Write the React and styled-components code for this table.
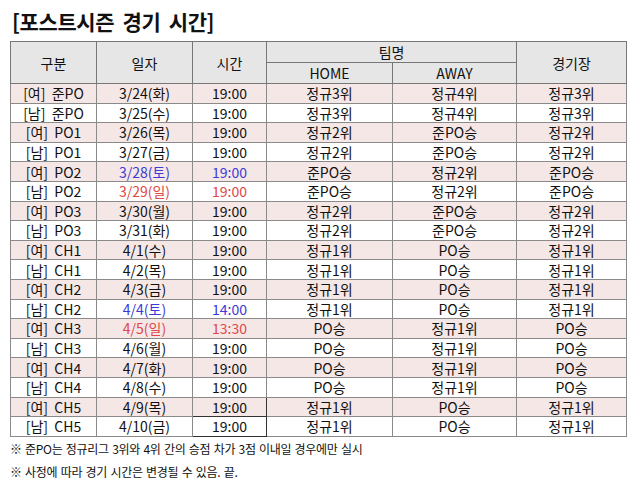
import React from 'react'
import styled, { createGlobalStyle } from 'styled-components'

const GlobalStyle = createGlobalStyle`
  body {
    margin: 0;
    background: #fff;
    font-family: "Noto Sans CJK KR", "Noto Sans", sans-serif;
    color: #111;
  }
`

const Page = styled.div`
  width: 640px;
  height: 483px;
  padding: 8px 0 0 10px;
  box-sizing: border-box;
`

const Title = styled.h1`
  margin: 0 0 6px 2px;
  font-size: 21px;
  font-weight: 700;
  line-height: 27px;
  letter-spacing: -0.4px;
  word-spacing: 4px;
`

const Table = styled.table`
  border-collapse: collapse;
  table-layout: fixed;
  width: 616px;
  border: 1px solid #666;
`

const Head = styled.th`
  background: #e6e6e6;
  font-weight: 400;
  font-size: 14px;
  height: ${p => p.$h || 20}px;
  padding: 0;
  border: 1px solid #777;
  text-align: center;
  vertical-align: middle;
  line-height: 1;
`

const Row = styled.tr`
  background: ${p => (p.$tint ? '#f6e7e7' : '#fff')};
`

const Cell = styled.td`
  height: 18.6px;
  padding: 0;
  font-size: 14px;
  line-height: 1;
  text-align: center;
  vertical-align: middle;
  white-space: pre;
  border: 1px solid #8a8a8a;
  color: ${p => (p.$tone === 'sat' ? '#3b3bd6' : p.$tone === 'sun' ? '#e04848' : '#111')};
  ${p => p.$picked && 'border: 1px solid #333;'}
`

const Note = styled.p`
  margin: 0;
  font-size: 12px;
  line-height: 23px;
  letter-spacing: -0.3px;
  word-spacing: 1px;
`

const rows = [
  ['[여]  준PO', '3/24(화)', '19:00', '정규3위', '정규4위', '정규3위'],
  ['[남]  준PO', '3/25(수)', '19:00', '정규3위', '정규4위', '정규3위'],
  ['[여]  PO1', '3/26(목)', '19:00', '정규2위', '준PO승', '정규2위'],
  ['[남]  PO1', '3/27(금)', '19:00', '정규2위', '준PO승', '정규2위'],
  ['[여]  PO2', '3/28(토)', '19:00', '준PO승', '정규2위', '준PO승', 'sat'],
  ['[남]  PO2', '3/29(일)', '19:00', '준PO승', '정규2위', '준PO승', 'sun'],
  ['[여]  PO3', '3/30(월)', '19:00', '정규2위', '준PO승', '정규2위'],
  ['[남]  PO3', '3/31(화)', '19:00', '정규2위', '준PO승', '정규2위'],
  ['[여]  CH1', '4/1(수)', '19:00', '정규1위', 'PO승', '정규1위'],
  ['[남]  CH1', '4/2(목)', '19:00', '정규1위', 'PO승', '정규1위'],
  ['[여]  CH2', '4/3(금)', '19:00', '정규1위', 'PO승', '정규1위'],
  ['[남]  CH2', '4/4(토)', '14:00', '정규1위', 'PO승', '정규1위', 'sat'],
  ['[여]  CH3', '4/5(일)', '13:30', 'PO승', '정규1위', 'PO승', 'sun'],
  ['[남]  CH3', '4/6(월)', '19:00', 'PO승', '정규1위', 'PO승'],
  ['[여]  CH4', '4/7(화)', '19:00', 'PO승', '정규1위', 'PO승'],
  ['[남]  CH4', '4/8(수)', '19:00', 'PO승', '정규1위', 'PO승'],
  ['[여]  CH5', '4/9(목)', '19:00', '정규1위', 'PO승', '정규1위'],
  ['[남]  CH5', '4/10(금)', '19:00', '정규1위', 'PO승', '정규1위'],
]

const widths = [86, 96, 74, 126, 124, 110]

const App = () => (
  <Page>
    <GlobalStyle />
    <Title>[포스트시즌 경기 시간]</Title>
    <Table>
      <colgroup>
        {widths.map((w, i) => <col key={i} style={{ width: w }} />)}
      </colgroup>
      <thead>
        <tr>
          <Head rowSpan={2}>구분</Head>
          <Head rowSpan={2}>일자</Head>
          <Head rowSpan={2}>시간</Head>
          <Head colSpan={2}>팀명</Head>
          <Head rowSpan={2}>경기장</Head>
        </tr>
        <tr>
          <Head $h={20}>HOME</Head>
          <Head $h={20}>AWAY</Head>
        </tr>
      </thead>
      <tbody>
        {rows.map((r, i) => (
          <Row key={i} $tint={i % 2 === 0}>
            <Cell>{r[0]}</Cell>
            <Cell $tone={r[6]}>{r[1]}</Cell>
            <Cell $tone={r[6]} $picked={i >= 16}>{r[2]}</Cell>
            <Cell>{r[3]}</Cell>
            <Cell>{r[4]}</Cell>
            <Cell>{r[5]}</Cell>
          </Row>
        ))}
      </tbody>
    </Table>
    <Note>※ 준PO는 정규리그 3위와 4위 간의 승점 차가 3점 이내일 경우에만 실시</Note>
    <Note>※ 사정에 따라 경기 시간은 변경될 수 있음. 끝.</Note>
  </Page>
)

export default App
